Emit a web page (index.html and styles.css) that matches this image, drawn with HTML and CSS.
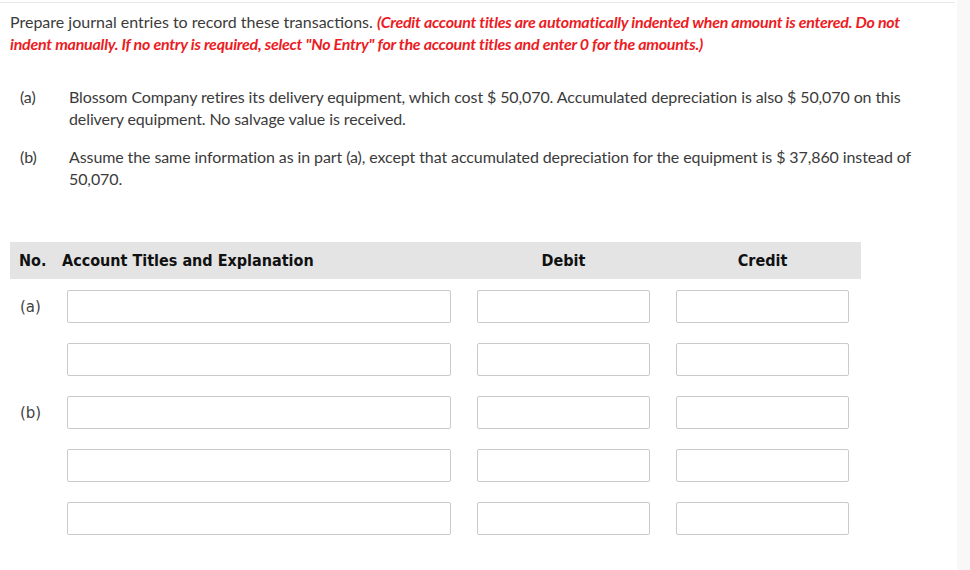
FILE: index.html
```html
<!DOCTYPE html>
<html>
<head>
<meta charset="utf-8">
<link rel="stylesheet" href="styles.css">
</head>
<body>
<div class="page">
  <main class="main">
    <p class="instructions">Prepare journal entries to record these transactions. <em class="note">(Credit account titles are automatically indented when amount is entered. Do not indent manually. If no entry is required, select "No Entry" for the account titles and enter 0 for the amounts.)</em></p>
    <div class="items">
      <div class="item">
        <span class="item-label">(a)</span>
        <p class="item-text">Blossom Company retires its delivery equipment, which cost $ 50,070. Accumulated depreciation is also $ 50,070 on this delivery equipment. No salvage value is received.</p>
      </div>
      <div class="item">
        <span class="item-label">(b)</span>
        <p class="item-text">Assume the same information as in part (a), except that accumulated depreciation for the equipment is $ 37,860 instead of 50,070.</p>
      </div>
    </div>
    <div class="journal">
      <div class="journal-head">
        <div class="h-no">No.</div>
        <div class="h-acct">Account Titles and Explanation</div>
        <div class="h-amt">Debit</div>
        <div class="h-amt">Credit</div>
      </div>
      <div class="journal-body">
        <div class="row"><div class="row-label">(a)</div><div class="field field-acct"></div><div class="field field-amt"></div><div class="field field-amt"></div></div>
        <div class="row"><div class="row-label"></div><div class="field field-acct"></div><div class="field field-amt"></div><div class="field field-amt"></div></div>
        <div class="row"><div class="row-label">(b)</div><div class="field field-acct"></div><div class="field field-amt"></div><div class="field field-amt"></div></div>
        <div class="row"><div class="row-label"></div><div class="field field-acct"></div><div class="field field-amt"></div><div class="field field-amt"></div></div>
        <div class="row"><div class="row-label"></div><div class="field field-acct"></div><div class="field field-amt"></div><div class="field field-amt"></div></div>
      </div>
    </div>
  </main>
  <aside class="side"></aside>
</div>
</body>
</html>
```

FILE: styles.css
```css
html, body {
  margin: 0;
  padding: 0;
  background: #fff;
}
.page {
  display: flex;
  min-height: 570px;
}
.main {
  width: 957px;
  flex: none;
  background: #fff;
  padding-top: 2px;
  box-sizing: border-box;
}
.side {
  flex: 1;
  background: #f8f8f8;
}
.instructions {
  margin: 0 2px 0 0;
  border-top: 1px solid #e8e8e8;
  padding: 8px 30px 0 10px;
  font-family: Lato, "Liberation Sans", sans-serif;
  font-size: 16px;
  line-height: 22px;
  color: #3b3b3b;
}
.note {
  color: #ec1c24;
  font-weight: bold;
  font-style: italic;
  letter-spacing: -0.25px;
}
.items {
  display: flex;
  flex-direction: column;
  gap: 16px;
  margin-top: 31px;
  padding-left: 20px;
}
.item {
  display: flex;
  font-family: Lato, "Liberation Sans", sans-serif;
  font-size: 16px;
  line-height: 22px;
  color: #3b3b3b;
  letter-spacing: -0.1px;
}
.item-label {
  width: 49px;
  flex: none;
}
.item-text {
  margin: 0;
  width: 860px;
}
.journal {
  margin-top: 52px;
  margin-left: 10px;
  width: 851px;
}
.journal-head {
  display: flex;
  gap: 26px;
  height: 37px;
  align-items: center;
  background: #e4e4e4;
  font-family: "DejaVu Sans Condensed", "DejaVu Sans", sans-serif;
  font-weight: bold;
  font-size: 16px;
  color: #111;
}
.h-no {
  width: 57px;
  margin-right: -26px;
  padding-left: 9px;
  box-sizing: border-box;
}
.h-acct {
  width: 389px;
  margin-left: -5px;
}
.h-amt {
  width: 173px;
  text-align: center;
}
.journal-body {
  display: flex;
  flex-direction: column;
  gap: 20px;
  padding-top: 11px;
}
.row {
  display: flex;
  align-items: center;
  gap: 26px;
}
.row-label {
  width: 57px;
  margin-right: -26px;
  padding-left: 10px;
  box-sizing: border-box;
  font-family: "DejaVu Sans", sans-serif;
  font-size: 15px;
  color: #444;
}
.field {
  height: 33px;
  box-sizing: border-box;
  border: 1px solid #cacaca;
  border-radius: 2px;
  background: #fff;
}
.field-acct {
  width: 384px;
}
.field-amt {
  width: 173px;
}
```
